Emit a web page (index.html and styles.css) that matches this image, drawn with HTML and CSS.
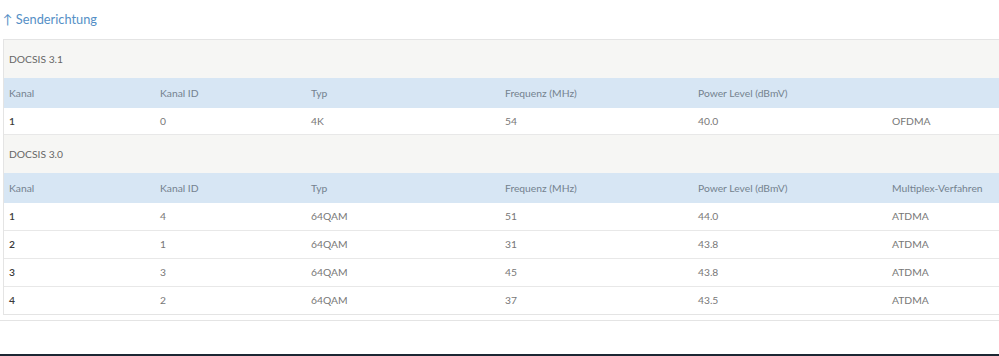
FILE: index.html
```html
<!DOCTYPE html>
<html>
<head>
    <meta charset="utf-8" />
    <title>Senderichtung</title>
    <link rel="stylesheet" href="styles.css">
</head>
<body>
    <div class="page">
        <h2 class="Title">&uarr; Senderichtung</h2>
        <div class="Panel">
            <div class="Box">
                <div class="Group">DOCSIS 3.1</div>
                <div class="Row Head">
                    <div>Kanal</div><div>Kanal ID</div><div>Typ</div><div>Frequenz (MHz)</div><div>Power Level (dBmV)</div><div></div>
                </div>
                <div class="Row Short">
                    <div class="Num">1</div><div>0</div><div>4K</div><div>54</div><div>40.0</div><div>OFDMA</div>
                </div>
                <div class="Group">DOCSIS 3.0</div>
                <div class="Row Head">
                    <div>Kanal</div><div>Kanal ID</div><div>Typ</div><div>Frequenz (MHz)</div><div>Power Level (dBmV)</div><div>Multiplex-Verfahren</div>
                </div>
                <div class="Row">
                    <div class="Num">1</div><div>4</div><div>64QAM</div><div>51</div><div>44.0</div><div>ATDMA</div>
                </div>
                <div class="Row">
                    <div class="Num">2</div><div>1</div><div>64QAM</div><div>31</div><div>43.8</div><div>ATDMA</div>
                </div>
                <div class="Row">
                    <div class="Num">3</div><div>3</div><div>64QAM</div><div>45</div><div>43.8</div><div>ATDMA</div>
                </div>
                <div class="Row Last">
                    <div class="Num">4</div><div>2</div><div>64QAM</div><div>37</div><div>43.5</div><div>ATDMA</div>
                </div>
            </div>
        </div>
    </div>
    <div class="Taskbar"></div>
</body>
</html>
```

FILE: styles.css
```css
html, body {
    margin: 0;
    padding: 0;
    background: #fff;
    overflow: hidden;
}
body {
    width: 999px;
    height: 356px;
    position: relative;
    font-family: "Source Sans Pro", Lato, "Liberation Sans", sans-serif;
    font-size: 10.3px;
    color: #777;
}
.page {
    height: 354px;
}
.Title {
    margin: 0;
    padding: 11px 0 0 3px;
    height: 39px;
    box-sizing: border-box;
    font-size: 12.8px;
    font-weight: normal;
    color: #558fc6;
}
.Panel {
    width: 1020px;
    padding-bottom: 5px;
    border-bottom: 1px solid #e4e4e4;
}
.Box {
    margin-left: 3px;
    border: 1px solid #e4e4e4;
    border-right: none;
}
.Group {
    height: 38px;
    line-height: 38px;
    padding-left: 5px;
    background: #f6f6f4;
    color: #666;
}
.Row {
    display: grid;
    grid-template-columns: 151px 151px 194px 193px 194px 1fr;
    height: 27px;
    line-height: 27px;
    border-bottom: 1px solid #e8e8e8;
}
.Row > div {
    padding-left: 5px;
}
.Row.Short {
    height: 26px;
    line-height: 26px;
}
.Row.Head {
    height: 30px;
    line-height: 30px;
    background: #d7e6f4;
    color: #74828f;
    border-bottom: none;
}
.Row.Last {
    border-bottom: none;
}
.Num {
    color: #3a3a3a;
    font-weight: 600;
}
.Taskbar {
    position: absolute;
    left: 0;
    right: 0;
    bottom: 0;
    height: 2px;
    background: #1c2733;
}
```
